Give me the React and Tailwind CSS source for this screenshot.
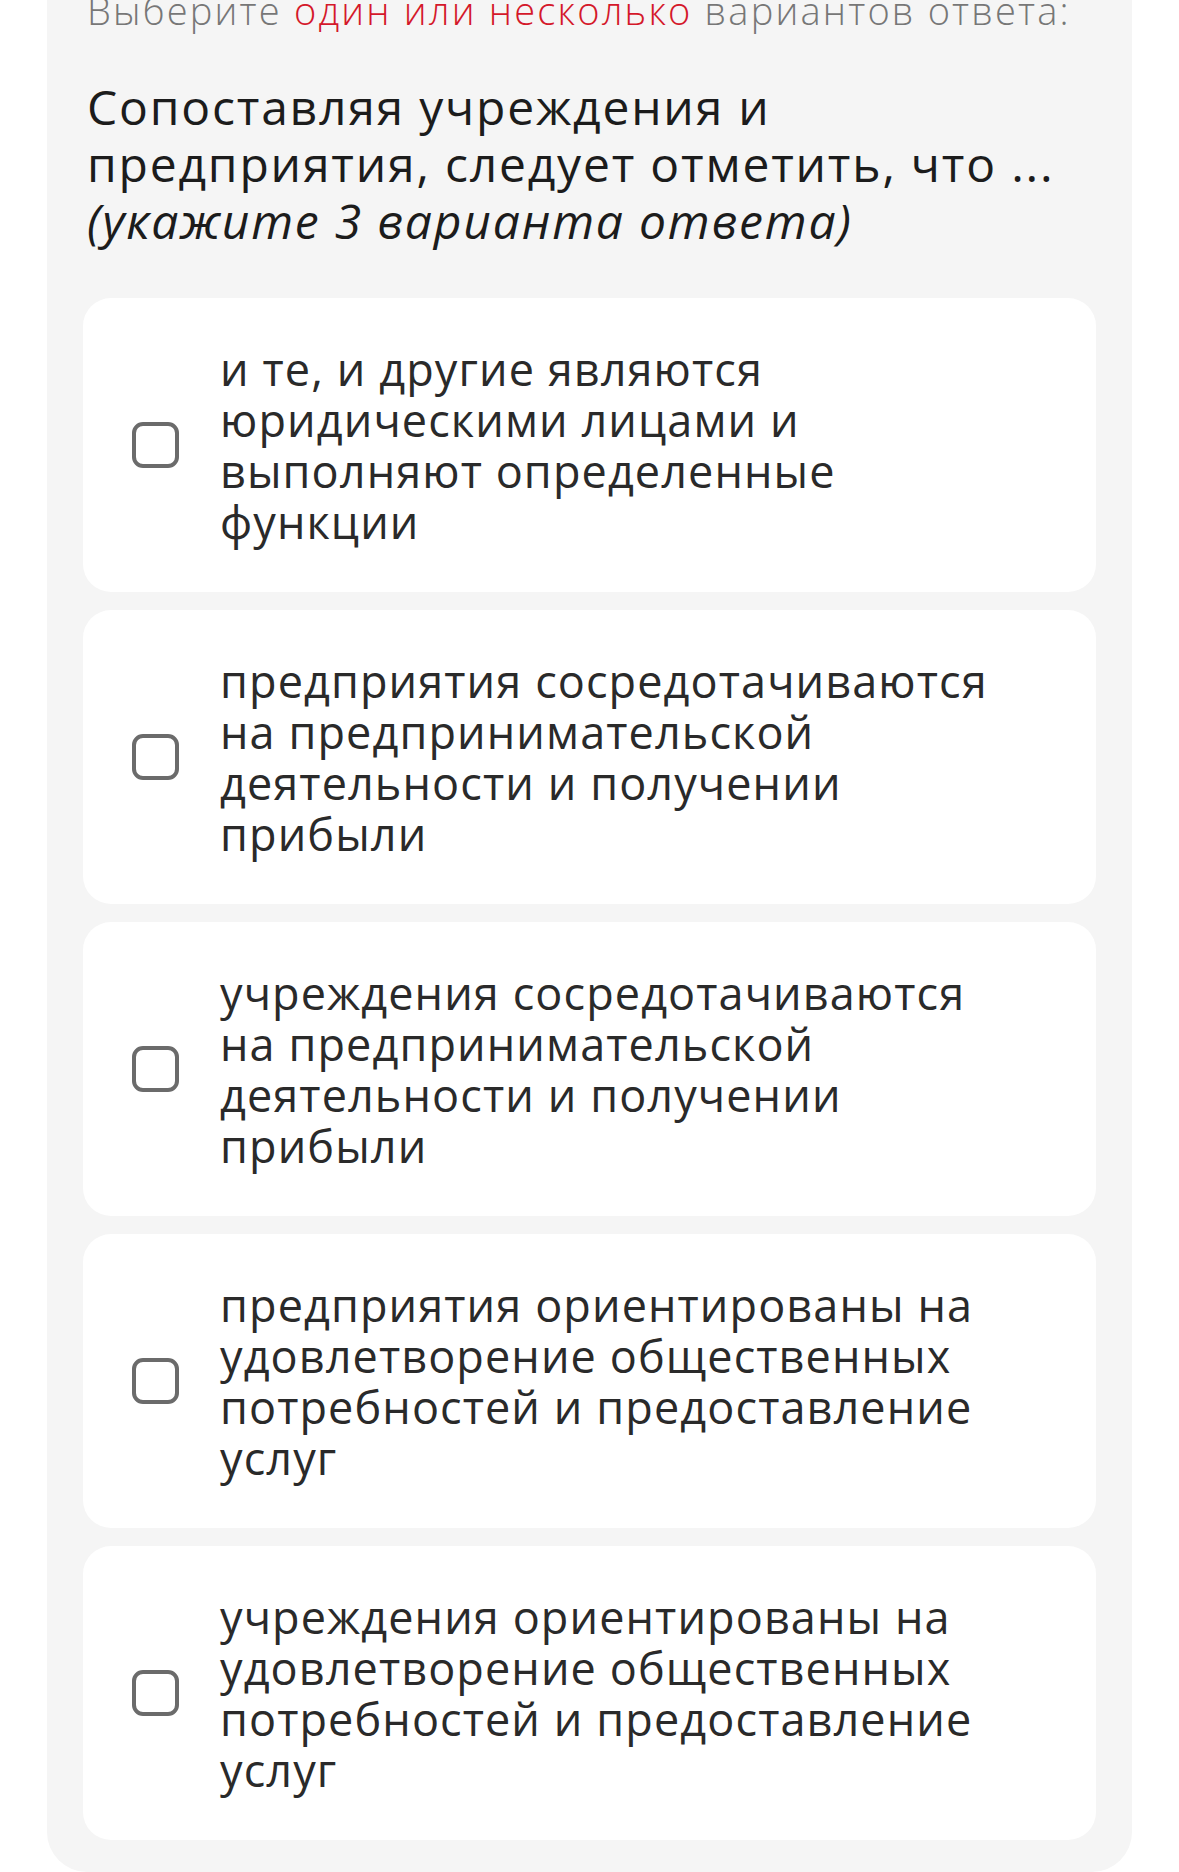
import { useState } from 'react';

const options = [
  'и те, и другие являются юридическими лицами и выполняют определенные функции',
  'предприятия сосредотачиваются на предпринимательской деятельности и получении прибыли',
  'учреждения сосредотачиваются на предпринимательской деятельности и получении прибыли',
  'предприятия ориентированы на удовлетворение общественных потребностей и предоставление услуг',
  'учреждения ориентированы на удовлетворение общественных потребностей и предоставление услуг',
];

function Option({ text, checked, onToggle }) {
  return (
    <button
      type="button"
      onClick={onToggle}
      className="flex items-center w-full text-left bg-white rounded-[28px] pl-[49px] pr-[85px] py-[45px]"
    >
      <span
        className={
          'shrink-0 w-[47px] h-[46px] rounded-[11px] border-[4px] ' +
          (checked ? 'border-[#d0121b] bg-[#d0121b]' : 'border-[#6b6b6b] bg-white')
        }
      />
      <span className="ml-[41px] flex-1 text-[45px] leading-[51px] tracking-[1.1px] text-[#2a2a2a]">{text}</span>
    </button>
  );
}

export default function App() {
  const [picked, setPicked] = useState([]);

  const toggle = (i) =>
    setPicked((p) => (p.includes(i) ? p.filter((x) => x !== i) : [...p, i]));

  return (
    <div className="min-h-[1872px] bg-white overflow-hidden" style={{ fontFamily: '"Open Sans", "Noto Sans", sans-serif' }}>
      <div className="mx-[47px] bg-[#f5f5f5] rounded-b-[40px] px-[36px] pb-[32px]">
        <p className="-mt-[10px] px-[4px] text-[38px] leading-[40px] tracking-[2.2px] text-[#777777] font-light whitespace-nowrap">
          Выберите <span className="text-[#d4182a]">один или несколько</span> вариантов ответа:
        </p>
        <h2 className="mt-[48px] px-[4px] text-[48px] leading-[57px] tracking-[1.8px] text-[#1c1c1c]">
          Сопоставляя учреждения и предприятия, следует отметить, что ...
          <br />
          <em>(укажите 3 варианта ответа)</em>
        </h2>
        <div className="mt-[49px] flex flex-col gap-[18px]">
          {options.map((t, i) => (
            <Option key={i} text={t} checked={picked.includes(i)} onToggle={() => toggle(i)} />
          ))}
        </div>
      </div>
    </div>
  );
}
